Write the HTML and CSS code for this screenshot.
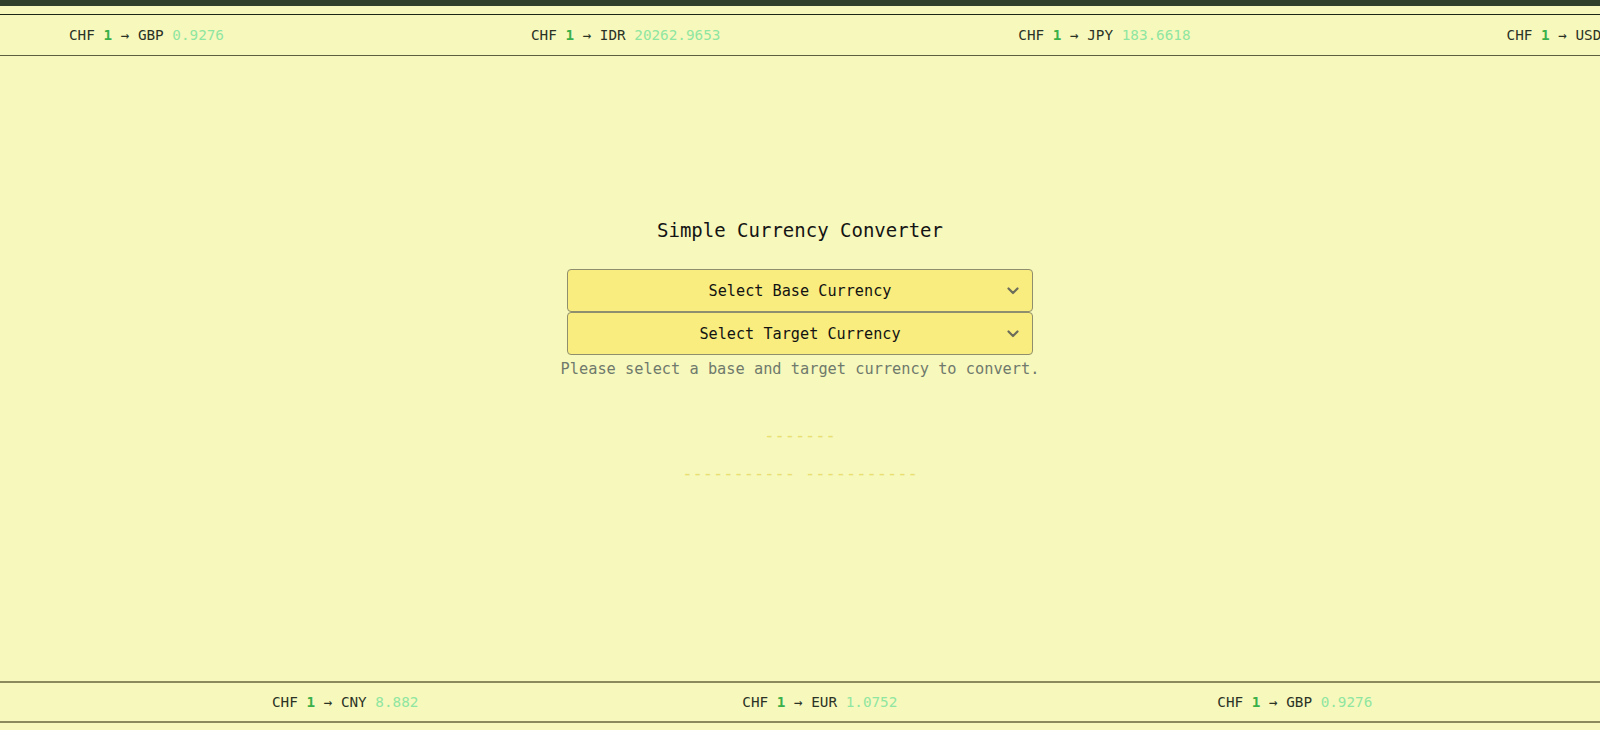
FILE: index.html
```html
<!DOCTYPE html>
<html lang="en">
<head>
<meta charset="utf-8">
<title>Simple Currency Converter</title>
<link rel="stylesheet" href="styles.css">
</head>
<body>
<div class="topbar"></div>
<div class="ticker ticker-top">
  <div class="track track-top">
    <span class="item"><span class="code">CHF</span> <b class="amt">1</b> <span class="arrow">&#8594;</span> <span class="code">GBP</span> <span class="rate">0.9276</span></span>
    <span class="item"><span class="code">CHF</span> <b class="amt">1</b> <span class="arrow">&#8594;</span> <span class="code">IDR</span> <span class="rate">20262.9653</span></span>
    <span class="item"><span class="code">CHF</span> <b class="amt">1</b> <span class="arrow">&#8594;</span> <span class="code">JPY</span> <span class="rate">183.6618</span></span>
    <span class="item"><span class="code">CHF</span> <b class="amt">1</b> <span class="arrow">&#8594;</span> <span class="code">USD</span> <span class="rate">1.1305</span></span>
  </div>
</div>
<main class="main">
  <h1 class="title">Simple Currency Converter</h1>
  <div class="selects">
    <div class="select">
      <span class="select-label">Select Base Currency</span>
      <svg class="chev" width="12" height="8" viewBox="0 0 12 8"><path d="M1.5 1.5 L6 6 L10.5 1.5" fill="none" stroke="#6d6d5c" stroke-width="2.2" stroke-linecap="round" stroke-linejoin="round"/></svg>
    </div>
    <div class="select">
      <span class="select-label">Select Target Currency</span>
      <svg class="chev" width="12" height="8" viewBox="0 0 12 8"><path d="M1.5 1.5 L6 6 L10.5 1.5" fill="none" stroke="#6d6d5c" stroke-width="2.2" stroke-linecap="round" stroke-linejoin="round"/></svg>
    </div>
  </div>
  <p class="hint">Please select a base and target currency to convert.</p>
  <div class="dash dash-1">-------</div>
  <div class="dash dash-2">----------- -----------</div>
</main>
<div class="ticker ticker-bottom">
  <div class="track track-bottom">
    <span class="item"><span class="code">CHF</span> <b class="amt">1</b> <span class="arrow">&#8594;</span> <span class="code">CNY</span> <span class="rate">8.882</span></span>
    <span class="item"><span class="code">CHF</span> <b class="amt">1</b> <span class="arrow">&#8594;</span> <span class="code">EUR</span> <span class="rate">1.0752</span></span>
    <span class="item"><span class="code">CHF</span> <b class="amt">1</b> <span class="arrow">&#8594;</span> <span class="code">GBP</span> <span class="rate">0.9276</span></span>
  </div>
</div>
</body>
</html>
```
FILE: styles.css
```css
* { box-sizing: border-box; }
html, body { margin: 0; padding: 0; }
body {
  width: 1600px;
  height: 730px;
  overflow: hidden;
  background: #f7f8bc;
  font-family: "DejaVu Sans Mono", "Liberation Mono", monospace;
  color: #1c1c1c;
  display: flex;
  flex-direction: column;
}
.topbar {
  height: 6px;
  background: #2f3f29;
  margin-bottom: 8px;
  flex: none;
}
.ticker {
  flex: none;
  height: 42px;
  overflow: hidden;
  display: flex;
  align-items: center;
  white-space: nowrap;
}
.ticker-top {
  border-top: 1px solid #1d2618;
  border-bottom: 1px solid #5e5e40;
}
.ticker-bottom {
  border-top: 2px solid #8a8a5c;
  border-bottom: 2px solid #8a8a5c;
  margin-bottom: 7px;
}
.track {
  display: flex;
  font-size: 14.3px;
  line-height: 18px;
}
.track-top { padding-left: 69px; }
.track-top .item:nth-child(1) { margin-right: 307px; }
.track-top .item:nth-child(2) { margin-right: 298px; }
.track-top .item:nth-child(3) { margin-right: 316px; }
.track-bottom { padding-left: 272px; }
.track-bottom .item:nth-child(1) { margin-right: 324px; }
.track-bottom .item:nth-child(2) { margin-right: 320px; }
.item { color: #2b3326; }
.amt { color: #3bb04a; font-weight: bold; }
.arrow { color: #2b3326; }
.rate { color: #8fe6a0; }
.main {
  flex: 1;
  display: flex;
  flex-direction: column;
  align-items: center;
  padding-top: 162px;
}
.title {
  margin: 0;
  font-size: 19px;
  line-height: 24px;
  font-weight: normal;
  color: #141414;
}
.selects {
  margin-top: 27px;
  width: 466px;
  display: flex;
  flex-direction: column;
}
.select {
  position: relative;
  height: 43px;
  background: #f8ed7e;
  border: 1px solid #8f8f6e;
  border-radius: 4px;
  display: flex;
  align-items: center;
  justify-content: center;
  font-size: 15.2px;
  color: #121212;
}
.chev {
  position: absolute;
  right: 13px;
  top: 17px;
}
.hint {
  margin: 4px 0 0;
  font-size: 15.3px;
  line-height: 20px;
  color: #6f7a6c;
}
.dash {
  font-size: 17px;
  line-height: 20px;
  color: #e9df72;
}
.dash-1 { margin-top: 46px; }
.dash-2 { margin-top: 18px; }
```
